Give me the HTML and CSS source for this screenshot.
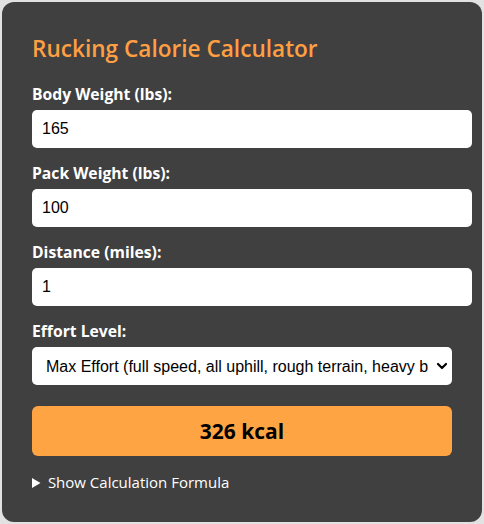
FILE: index.html
```html
<!DOCTYPE html>
<html lang="en">
<head>
<meta charset="utf-8">
<title>Rucking Calorie Calculator</title>
<link rel="stylesheet" href="styles.css">
</head>
<body>
<div class="card">
  <h2 class="title">Rucking Calorie Calculator</h2>
  <div class="field">
    <label class="label" for="bw">Body Weight (lbs):</label>
    <input class="input" id="bw" type="number" value="165">
  </div>
  <div class="field">
    <label class="label" for="pw">Pack Weight (lbs):</label>
    <input class="input" id="pw" type="number" value="100">
  </div>
  <div class="field">
    <label class="label" for="dist">Distance (miles):</label>
    <input class="input" id="dist" type="number" value="1">
  </div>
  <div class="field">
    <label class="label" for="effort">Effort Level:</label>
    <div class="select-wrap">
      <select class="select" id="effort">
        <option>Max Effort (full speed, all uphill, rough terrain, heavy backpack)</option>
      </select>
      <svg class="chev" width="12" height="8" viewBox="0 0 12 8"><path d="M2 2 L6 6 L10 2" fill="none" stroke="#000" stroke-width="2.2" stroke-linecap="round" stroke-linejoin="round"/></svg>
    </div>
  </div>
  <div class="result">326 kcal</div>
  <details class="formula">
    <summary class="summary">Show Calculation Formula</summary>
  </details>
</div>
</body>
</html>
```
FILE: styles.css
```css
html, body {
  margin: 0;
  padding: 0;
}
body {
  background: #e2e2e2;
  font-family: "Open Sans", sans-serif;
  padding-top: 2px;
}
.card {
  box-sizing: border-box;
  max-width: 480px;
  margin: 0 auto;
  height: 520px;
  background: #404040;
  border-radius: 12px;
  padding: 30px;
  color: #fff;
}
.title {
  margin: 3px 0 22px;
  color: #ff9f43;
  font-size: 22.6px;
  font-weight: 600;
  line-height: 27px;
}
.field {
  margin-bottom: 15px;
}
.label {
  display: block;
  font-weight: 700;
  font-size: 15.7px;
  line-height: 20px;
  margin-bottom: 6px;
}
.input {
  display: block;
  width: 420px;
  box-sizing: content-box;
  height: 18px;
  padding: 10px;
  border: none;
  border-radius: 5px;
  background: #fff;
  font-family: "Liberation Sans", Arial, sans-serif;
  font-size: 16px;
  color: #000;
  outline: none;
  -moz-appearance: textfield;
  appearance: textfield;
}
.input::-webkit-inner-spin-button,
.input::-webkit-outer-spin-button {
  -webkit-appearance: none;
  margin: 0;
}
.select-wrap {
  position: relative;
  width: 420px;
}
.select {
  display: block;
  width: 420px;
  height: 38px;
  padding: 0 24px 0 14px;
  border: none;
  border-radius: 5px;
  background: #fff;
  font-family: "Liberation Sans", Arial, sans-serif;
  font-size: 16px;
  color: #000;
  -webkit-appearance: none;
  appearance: none;
  outline: none;
}
.chev {
  position: absolute;
  right: 4px;
  top: 15px;
  pointer-events: none;
}
.result {
  margin-top: 21px;
  height: 50px;
  line-height: 50px;
  background: #ffa443;
  border-radius: 6px;
  text-align: center;
  color: #000;
  font-size: 21px;
  font-weight: 700;
}
.formula {
  margin-top: 16px;
}
.summary {
  font-size: 15px;
  line-height: 20px;
  cursor: pointer;
}
```
